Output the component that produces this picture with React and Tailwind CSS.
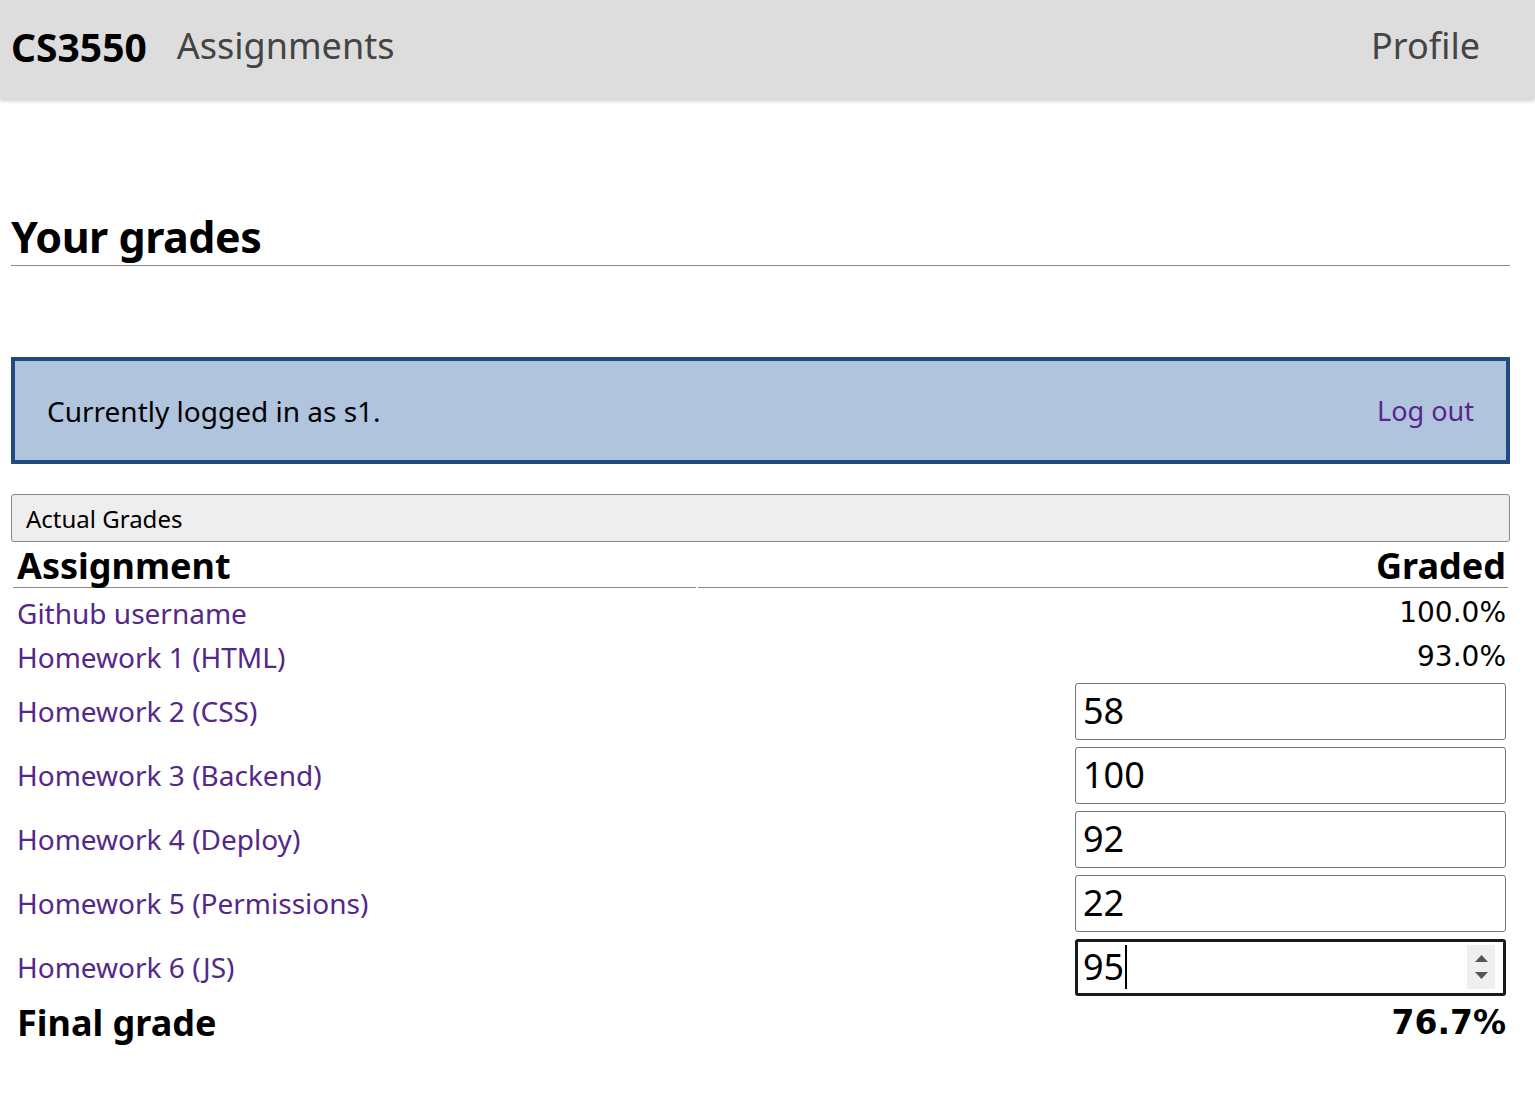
import React from "react";

const rows = [
  { name: "Github username", value: "100.0%" },
  { name: "Homework 1 (HTML)", value: "93.0%" },
  { name: "Homework 2 (CSS)", input: "58" },
  { name: "Homework 3 (Backend)", input: "100" },
  { name: "Homework 4 (Deploy)", input: "92" },
  { name: "Homework 5 (Permissions)", input: "22" },
  { name: "Homework 6 (JS)", input: "95", focused: true },
];

const dejavu = { fontFamily: '"DejaVu Sans", sans-serif' };

export default function App() {
  return (
    <div className="min-h-[1094px] bg-white text-black" style={{ fontFamily: '"Noto Sans", "Open Sans", sans-serif' }}>
      <nav className="flex h-[99px] items-center bg-[#dddddd] pb-[7px] pl-[11px] pr-[55px] shadow-[0_2px_4px_rgba(0,0,0,0.2)]">
        <span className="text-[39px] font-bold leading-none">CS3550</span>
        <a className="ml-[30px] text-[36px] leading-none text-[#444]">Assignments</a>
        <a className="ml-auto text-[36px] leading-none text-[#444]">Profile</a>
      </nav>

      <main className="pl-[11px] pr-[25px]">
        <h1 className="mt-[112px] border-b border-[#888] pb-[2px] text-[43px] font-bold leading-[52px] tracking-[-0.5px]">
          Your grades
        </h1>

        <div className="mt-[91px] flex h-[107px] items-center justify-between border-4 border-[#234a80] bg-[#b0c4de] px-[32px] pt-[1px]">
          <span className="text-[28px]">Currently logged in as s1.</span>
          <a className="text-[27px] text-[#55278b]">Log out</a>
        </div>

        <div className="mt-[30px] flex h-[48px] items-center rounded-[3px] border border-[#888] bg-[#eeeeee] px-[14px] pt-[2px] text-[24px]">
          Actual Grades
        </div>

        <table className="w-full border-separate border-spacing-[2px]">
          <thead>
            <tr>
              <th className="w-[683px] border-b border-[#888] px-[4px] pt-[1px] text-left text-[36px] font-bold leading-[42px]">
                Assignment
              </th>
              <th className="border-b border-[#888] px-[2px] pt-[1px] text-right text-[36px] font-bold leading-[42px]">
                Graded
              </th>
            </tr>
          </thead>
          <tbody>
            {rows.map((r, i) => (
              <tr key={r.name}>
                <td
                  className={`px-[4px] text-[28px] text-[#55278b] ${r.input ? "leading-[62px]" : "leading-[42px]"} ${
                    i === 0 ? "pt-[2px]" : ""
                  }`}
                >
                  {r.name}
                </td>
                <td className={`px-[2px] text-right text-[28px] leading-[42px] ${i === 0 ? "pt-[2px]" : ""}`} style={r.input ? undefined : dejavu}>
                  {r.input ? (
                    <div className="flex justify-end py-[2px]">
                      <div
                        className={`flex h-[57px] w-[431px] items-center rounded-[3px] bg-white pr-[8px] text-left text-[36px] leading-none ${
                          r.focused ? "border-[3px] border-[#1a1a1a] pl-[5px]" : "border border-[#767676] pl-[7px]"
                        }`}
                      >
                        <span>{r.input}</span>
                        {r.focused && <span className="ml-[1px] h-[44px] w-[2px] bg-black" />}
                        {r.focused && (
                          <span className="ml-auto flex h-[44px] w-[28px] flex-col items-center justify-center gap-[10px] bg-[#efefef]">
                            <svg width="13" height="7" viewBox="0 0 13 7"><path d="M6.5 0L13 7H0z" fill="#555" /></svg>
                            <svg width="13" height="7" viewBox="0 0 13 7"><path d="M0 0H13L6.5 7z" fill="#555" /></svg>
                          </span>
                        )}
                      </div>
                    </div>
                  ) : (
                    r.value
                  )}
                </td>
              </tr>
            ))}
            <tr>
              <td className="px-[4px] text-[36px] font-bold leading-[46px]">Final grade</td>
              <td className="px-[2px] text-right text-[33px] font-bold leading-[46px]" style={dejavu}>
                76.7%
              </td>
            </tr>
          </tbody>
        </table>
      </main>
    </div>
  );
}
